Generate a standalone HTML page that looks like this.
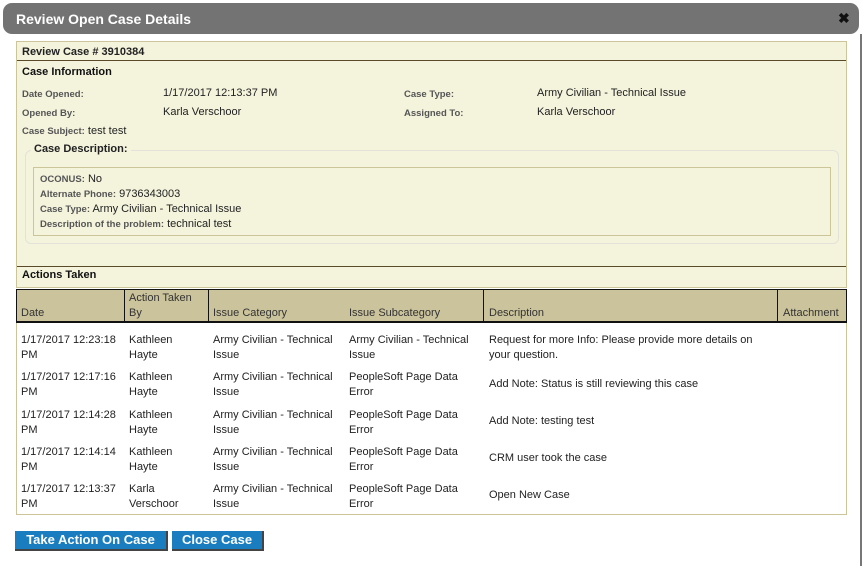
<!DOCTYPE html>
<html><head><meta charset="utf-8"><style>
*{margin:0;padding:0;box-sizing:border-box}
body{width:862px;height:566px;background:#fff;font-family:"Liberation Sans",sans-serif;font-size:11px;color:#222;position:relative;overflow:hidden}
.a{position:absolute;white-space:nowrap}
.lb{font-size:9.5px;font-weight:bold;color:#555}
.t{line-height:15px;font-size:11px;color:#222}
.btn{position:absolute;background:#1a7dc0;color:#fff;font-weight:bold;font-size:13px;text-align:center;line-height:18px;border-right:2px solid #444;border-bottom:2px solid #444}
</style></head><body>
<div class="a" style="left:3px;top:3px;width:856px;height:31px;background:#737373;border-radius:9px"></div>
<div class="a" style="left:16px;top:11px;color:#fff;font-weight:bold;font-size:14px">Review Open Case Details</div>
<div class="a" style="left:838px;top:10px;color:#111;font-weight:bold;font-size:14px">✖</div>
<div class="a" style="left:860px;top:34px;width:2px;height:532px;background:#777"></div>

<div class="a" style="left:16px;top:41px;width:831px;height:247px;background:#f4f3dc;border:1px solid #cdc59a"></div>
<div class="a" style="left:17px;top:60px;width:829px;height:1px;background:#5b4a2a"></div>
<div class="a" style="left:22px;top:46px;font-weight:bold;font-size:11px">Review Case # 3910384</div>
<div class="a" style="left:22px;top:66px;font-weight:bold;font-size:11px;color:#111">Case Information</div>

<div class="a lb" style="left:22px;top:89px">Date Opened:</div>
<div class="a t" style="left:163px;top:86px">1/17/2017 12:13:37 PM</div>
<div class="a lb" style="left:404px;top:89px">Case Type:</div>
<div class="a t" style="left:537px;top:86px">Army Civilian - Technical Issue</div>
<div class="a lb" style="left:22px;top:108px">Opened By:</div>
<div class="a t" style="left:163px;top:105px">Karla Verschoor</div>
<div class="a lb" style="left:404px;top:108px">Assigned To:</div>
<div class="a t" style="left:537px;top:105px">Karla Verschoor</div>
<div class="a" style="left:22px;top:124px"><span class="lb">Case Subject:</span> <span class="t">test test</span></div>

<div class="a" style="left:25px;top:150px;width:814px;height:94px;border:1px solid #e2e2da;border-radius:6px"></div>
<div class="a" style="left:31px;top:143px;padding:0 3px;background:#f4f3dc;font-weight:bold;font-size:11px">Case Description:</div>
<div class="a" style="left:33px;top:167px;width:798px;height:69px;border:1px solid #cdc59a"></div>
<div class="a" style="left:40px;top:172px"><span class="lb">OCONUS:</span> <span class="t">No</span></div>
<div class="a" style="left:40px;top:187px"><span class="lb">Alternate Phone:</span> <span class="t">9736343003</span></div>
<div class="a" style="left:40px;top:202px"><span class="lb">Case Type:</span> <span class="t">Army Civilian - Technical Issue</span></div>
<div class="a" style="left:40px;top:217px"><span class="lb">Description of the problem:</span> <span class="t">technical test</span></div>

<div class="a" style="left:17px;top:266px;width:829px;height:1px;background:#5b4a2a"></div>
<div class="a" style="left:22px;top:269px;font-weight:bold;font-size:11px;color:#111">Actions Taken</div>

<div class="a" style="left:16px;top:289px;width:831px;height:226px;border:1px solid #cdc59a;background:#fff"></div>
<div class="a" style="left:16px;top:289px;width:831px;height:34px;background:#cbc39b;border:1px solid #111;border-bottom:2px solid #111"></div>
<div class="a" style="left:124px;top:289px;width:1px;height:34px;background:#111"></div>
<div class="a" style="left:208px;top:289px;width:1px;height:34px;background:#111"></div>
<div class="a" style="left:483px;top:289px;width:1px;height:34px;background:#111"></div>
<div class="a" style="left:777px;top:289px;width:1px;height:34px;background:#111"></div>
<div class="a t" style="left:21px;top:306px;color:#333">Date</div>
<div class="a t" style="left:129px;top:291px;color:#333">Action Taken<br>By</div>
<div class="a t" style="left:213px;top:306px;color:#333">Issue Category</div>
<div class="a t" style="left:349px;top:306px;color:#333">Issue Subcategory</div>
<div class="a t" style="left:489px;top:306px;color:#333">Description</div>
<div class="a t" style="left:783px;top:306px;color:#333">Attachment</div>

<div class="a t" style="left:21px;top:333px">1/17/2017 12:23:18<br>PM</div>
<div class="a t" style="left:129px;top:333px">Kathleen<br>Hayte</div>
<div class="a t" style="left:213px;top:333px">Army Civilian - Technical<br>Issue</div>
<div class="a t" style="left:349px;top:333px">Army Civilian - Technical<br>Issue</div>
<div class="a t" style="left:489px;top:333px">Request for more Info: Please provide more details on<br>your question.</div>

<div class="a t" style="left:21px;top:370px">1/17/2017 12:17:16<br>PM</div>
<div class="a t" style="left:129px;top:370px">Kathleen<br>Hayte</div>
<div class="a t" style="left:213px;top:370px">Army Civilian - Technical<br>Issue</div>
<div class="a t" style="left:349px;top:370px">PeopleSoft Page Data<br>Error</div>
<div class="a t" style="left:489px;top:377px">Add Note: Status is still reviewing this case</div>

<div class="a t" style="left:21px;top:408px">1/17/2017 12:14:28<br>PM</div>
<div class="a t" style="left:129px;top:408px">Kathleen<br>Hayte</div>
<div class="a t" style="left:213px;top:408px">Army Civilian - Technical<br>Issue</div>
<div class="a t" style="left:349px;top:408px">PeopleSoft Page Data<br>Error</div>
<div class="a t" style="left:489px;top:414px">Add Note: testing test</div>

<div class="a t" style="left:21px;top:445px">1/17/2017 12:14:14<br>PM</div>
<div class="a t" style="left:129px;top:445px">Kathleen<br>Hayte</div>
<div class="a t" style="left:213px;top:445px">Army Civilian - Technical<br>Issue</div>
<div class="a t" style="left:349px;top:445px">PeopleSoft Page Data<br>Error</div>
<div class="a t" style="left:489px;top:451px">CRM user took the case</div>

<div class="a t" style="left:21px;top:482px">1/17/2017 12:13:37<br>PM</div>
<div class="a t" style="left:129px;top:482px">Karla<br>Verschoor</div>
<div class="a t" style="left:213px;top:482px">Army Civilian - Technical<br>Issue</div>
<div class="a t" style="left:349px;top:482px">PeopleSoft Page Data<br>Error</div>
<div class="a t" style="left:489px;top:488px">Open New Case</div>

<div class="btn" style="left:15px;top:531px;width:153px;height:20px">Take Action On Case</div>
<div class="btn" style="left:172px;top:531px;width:92px;height:20px">Close Case</div>
</body></html>
